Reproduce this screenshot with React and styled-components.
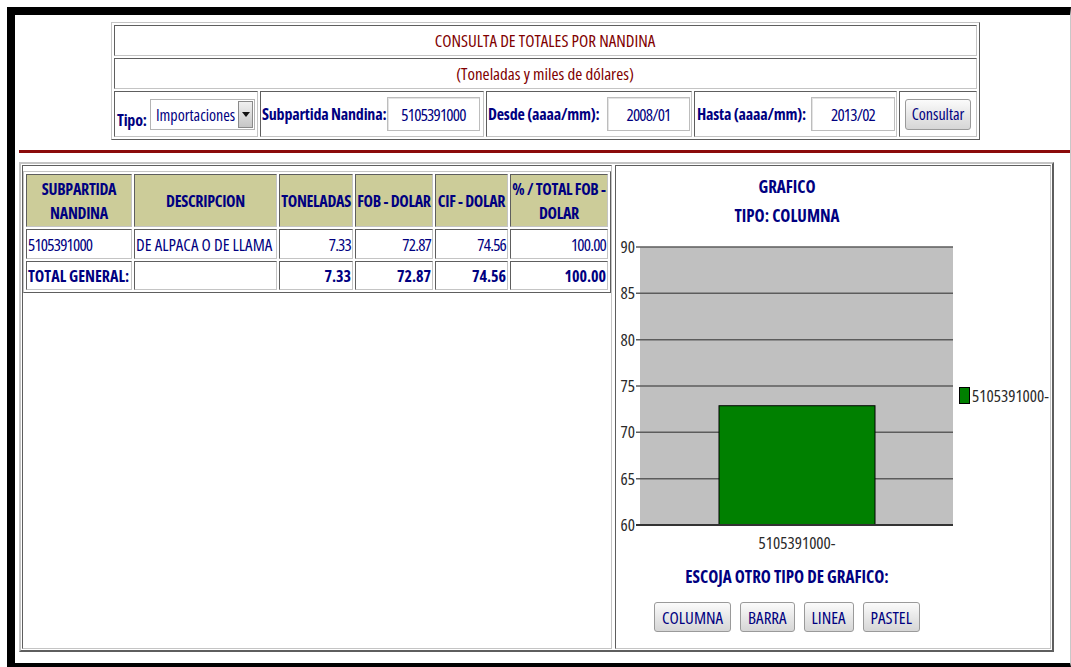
import React from 'react';
import styled, { createGlobalStyle } from 'styled-components';

const FONT = `"Open Sans", "Roboto Condensed", "DejaVu Sans Condensed", sans-serif`;
const STRETCH = '75%';
const NAVY = '#000080';
const MAROON = '#800000';
const LIGHT = '#c4c4c4';
const DARK = '#5e5e5e';

const GlobalStyle = createGlobalStyle`
  html, body { margin: 0; padding: 0; background: #fff; }
  body { font-family: ${FONT}; font-stretch: ${STRETCH}; color: ${NAVY}; }
  * { box-sizing: border-box; }
`;

const Frame = styled.div`
  margin: 7px 0 0 7px;
  height: 660px;
  border-top: 8px solid #000;
  border-left: 8px solid #000;
  border-bottom: 4px solid #000;
  border-right: 1px solid #c8c8c8;
  overflow: hidden;
`;

/* ---------- query form ---------- */
const QueryTable = styled.table`
  margin: 7px 0 0 96px;
  width: 869px;
  height: 118px;
  border-collapse: separate;
  border-spacing: 2px;
  border: 1px solid;
  border-color: ${LIGHT} ${DARK} ${DARK} ${LIGHT};
  table-layout: fixed;
`;

const Col = styled.col`
  width: ${p => p.$w}px;
`;

const FormRow = styled.tr`
  height: ${p => p.$h}px;
`;

const Cell = styled.td`
  border: 1px solid;
  border-color: ${DARK} ${LIGHT} ${LIGHT} ${DARK};
  padding: 0 ${p => p.$pad ?? 2}px 0 ${p => p.$padl ?? 1}px;
  text-align: ${p => p.$align || 'left'};
  vertical-align: middle;
`;

const Heading = styled.div`
  color: ${MAROON};
  font-size: 17px;
  line-height: 22px;
  text-align: center;
`;

const Field = styled.div`
  display: flex;
  align-items: ${p => (p.$bottom ? 'flex-end' : 'center')};
  justify-content: space-between;
  height: 44px;
  padding-bottom: ${p => (p.$bottom ? 6 : 0)}px;
`;

const Label = styled.span`
  font-weight: bold;
  font-size: 16px;
  letter-spacing: -0.2px;
  line-height: 20px;
  white-space: nowrap;
`;

const SelectBox = styled.div`
  display: flex;
  align-items: center;
  justify-content: space-between;
  width: 105px;
  height: 31px;
  border: 1px solid #b4b4b4;
  background: #fff;
  padding: 0 1px 0 5px;
  font-size: 16px;
`;

const SelectArrow = styled.span`
  width: 15px;
  height: 27px;
  border: 1px solid #8a8a8a;
  background: linear-gradient(#f0f0f0, #c6c6c6);
  display: flex;
  align-items: center;
  justify-content: center;
  &::after {
    content: '';
    border-left: 4px solid transparent;
    border-right: 4px solid transparent;
    border-top: 5px solid #111;
  }
`;

const TextInput = styled.input`
  width: ${p => p.$w}px;
  height: 34px;
  border: 1px solid #bdbdbd;
  box-shadow: inset 1px 1px 0 #e4e4e4;
  text-align: center;
  font-family: ${FONT};
  font-stretch: ${STRETCH};
  font-size: 17px;
  letter-spacing: -0.8px;
  color: ${NAVY};
  padding: 0;
  outline: none;
`;

const PushButton = styled.button`
  height: ${p => p.$h || 30}px;
  padding: 0 ${p => p.$px || 7}px;
  border: 1px solid #9a9a9a;
  border-radius: 3px;
  background: linear-gradient(#fbfbfb, #e6e6e6 55%, #d6d6d6);
  font-family: ${FONT};
  font-stretch: ${STRETCH};
  font-size: ${p => p.$fs || 17}px;
  color: ${NAVY};
  cursor: pointer;
`;

const RedRule = styled.div`
  margin: 10px 0 0 4px;
  height: 3px;
  background: #8b0a0a;
`;

/* ---------- results ---------- */
const Results = styled.div`
  margin: 9px 0 0 4px;
  width: 1035px;
  height: 490px;
  display: grid;
  grid-template-columns: 590px 436px;
  gap: 3px;
  padding: 1px;
  border: 2px solid;
  border-color: ${LIGHT} ${DARK} ${DARK} ${LIGHT};
`;

const Pane = styled.div`
  border: 1px solid;
  border-color: ${DARK} ${LIGHT} ${LIGHT} ${DARK};
  display: flex;
  flex-direction: column;
  align-items: stretch;
`;

const DataTable = styled.table`
  margin: 5px 0 0 0;
  border-collapse: separate;
  border-spacing: 2px;
  border: 1px solid;
  border-color: ${LIGHT} ${DARK} ${DARK} ${LIGHT};
  table-layout: fixed;
  width: 588px;
  font-size: 17px;
`;

const DataRow = styled.tr`
  height: ${p => p.$h}px;
`;

const HeadCell = styled.th`
  width: ${p => p.$w}px;
  background: #cccc99;
  border: 1px solid;
  border-color: ${DARK} ${LIGHT} ${LIGHT} ${DARK};
  font-weight: bold;
  font-size: 16px;
  letter-spacing: -0.3px;
  line-height: 24px;
  padding: 0;
  text-align: center;
  vertical-align: middle;
  white-space: nowrap;
  overflow: hidden;
`;

const DataCell = styled.td`
  border: 1px solid;
  border-color: ${DARK} ${LIGHT} ${LIGHT} ${DARK};
  padding: 0 1px;
  text-align: ${p => (p.$num ? 'right' : 'left')};
  font-weight: ${p => (p.$bold ? 'bold' : 'normal')};
  font-size: ${p => (p.$bold ? 16 : 17)}px;
  letter-spacing: ${p => (p.$digits && !p.$bold ? -0.8 : 0)}px;
  white-space: nowrap;
  overflow: hidden;
  vertical-align: middle;
`;

const Caption = styled.div`
  font-weight: bold;
  font-size: 17px;
  line-height: 22px;
  text-align: center;
  padding-right: 92px;
  margin-top: ${p => p.$mt || 0}px;
`;

const ChartSvg = styled.svg`
  display: block;
`;

const ButtonRow = styled.div`
  display: flex;
  justify-content: center;
  gap: 9px;
  padding-right: 92px;
  margin-top: 14px;
`;

const ChartText = styled.text`
  font-family: ${FONT};
  font-stretch: ${STRETCH};
  font-size: 17px;
  fill: #2a2a2a;
`;

const rows = [
  { code: '5105391000', desc: 'DE ALPACA O DE LLAMA', ton: '7.33', fob: '72.87', cif: '74.56', pct: '100.00' },
];

const TICKS = [90, 85, 80, 75, 70, 65, 60];
const PLOT = { x: 24, w: 313, top: 20, bottom: 298, min: 60, max: 90 };
const yOf = v => PLOT.top + ((PLOT.max - v) / (PLOT.max - PLOT.min)) * (PLOT.bottom - PLOT.top);

function ColumnChart({ label, value }) {
  const barTop = yOf(value);
  return (
    <ChartSvg width="434" height="330" viewBox="0 0 434 330">
      <rect x={PLOT.x} y={PLOT.top} width={PLOT.w} height={PLOT.bottom - PLOT.top} fill="#c0c0c0" />
      {TICKS.map(t => (
        <g key={t}>
          <line
            x1={PLOT.x - 4}
            x2={PLOT.x + PLOT.w}
            y1={yOf(t)}
            y2={yOf(t)}
            stroke={t === 60 ? '#333' : '#5c5c5c'}
            strokeWidth={t === 60 ? 2 : 1.5}
          />
          <ChartText x={PLOT.x - 5} y={yOf(t) + 6} textAnchor="end">{t}</ChartText>
        </g>
      ))}
      <rect x="103" y={barTop} width="156" height={PLOT.bottom - barTop} fill="#008000" stroke="#000" strokeWidth="1" />
      <line x1={PLOT.x - 4} x2={PLOT.x + PLOT.w} y1={PLOT.bottom} y2={PLOT.bottom} stroke="#333" strokeWidth="2" />
      <rect x="343.5" y="160.5" width="10" height="16" fill="#008000" stroke="#000" strokeWidth="1" />
      <ChartText x="356" y="175">{label}</ChartText>
      <ChartText x="181" y="322" textAnchor="middle">{label}</ChartText>
    </ChartSvg>
  );
}

export default function App() {
  const total = rows[0];
  return (
    <>
      <GlobalStyle />
      <Frame>
        <QueryTable>
          <colgroup>
            <Col $w={144} />
            <Col $w={224} />
            <Col $w={206} />
            <Col $w={203} />
            <Col $w={78} />
          </colgroup>
          <tbody>
            <FormRow $h={31}>
              <Cell colSpan={5}><Heading>CONSULTA DE TOTALES POR NANDINA</Heading></Cell>
            </FormRow>
            <FormRow $h={31}>
              <Cell colSpan={5}><Heading>(Toneladas y miles de dólares)</Heading></Cell>
            </FormRow>
            <FormRow $h={46}>
              <Cell $padl={2}>
                <Field $bottom>
                  <Label>Tipo:</Label>
                  <SelectBox>
                    <span>Importaciones</span>
                    <SelectArrow />
                  </SelectBox>
                </Field>
              </Cell>
              <Cell $pad={3}>
                <Field>
                  <Label>Subpartida Nandina:</Label>
                  <TextInput $w={93} value="5105391000" readOnly />
                </Field>
              </Cell>
              <Cell $pad={1}>
                <Field>
                  <Label>Desde (aaaa/mm):</Label>
                  <TextInput $w={83} value="2008/01" readOnly />
                </Field>
              </Cell>
              <Cell $pad={1} $padl={2}>
                <Field>
                  <Label>Hasta (aaaa/mm):</Label>
                  <TextInput $w={84} value="2013/02" readOnly />
                </Field>
              </Cell>
              <Cell $align="center" $pad={1}>
                <PushButton $h={31} $px={6} $fs={16}>Consultar</PushButton>
              </Cell>
            </FormRow>
          </tbody>
        </QueryTable>

        <RedRule />

        <Results>
          <Pane>
            <DataTable>
              <tbody>
                <DataRow $h={53}>
                  <HeadCell $w={106}>SUBPARTIDA<br />NANDINA</HeadCell>
                  <HeadCell $w={143}>DESCRIPCION</HeadCell>
                  <HeadCell $w={74}>TONELADAS</HeadCell>
                  <HeadCell $w={78}>FOB - DOLAR</HeadCell>
                  <HeadCell $w={73}>CIF - DOLAR</HeadCell>
                  <HeadCell $w={98}>% / TOTAL FOB -<br />DOLAR</HeadCell>
                </DataRow>
                {rows.map(r => (
                  <DataRow $h={30} key={r.code}>
                    <DataCell $digits>{r.code}</DataCell>
                    <DataCell>{r.desc}</DataCell>
                    <DataCell $num $digits>{r.ton}</DataCell>
                    <DataCell $num $digits>{r.fob}</DataCell>
                    <DataCell $num $digits>{r.cif}</DataCell>
                    <DataCell $num $digits>{r.pct}</DataCell>
                  </DataRow>
                ))}
                <DataRow $h={29}>
                  <DataCell $bold>TOTAL GENERAL:</DataCell>
                  <DataCell />
                  <DataCell $num $bold>{total.ton}</DataCell>
                  <DataCell $num $bold>{total.fob}</DataCell>
                  <DataCell $num $bold>{total.cif}</DataCell>
                  <DataCell $num $bold>{total.pct}</DataCell>
                </DataRow>
              </tbody>
            </DataTable>
          </Pane>

          <Pane>
            <Caption $mt={10}>GRAFICO</Caption>
            <Caption $mt={7}>TIPO: COLUMNA</Caption>
            <ColumnChart label="5105391000-" value={72.87} />
            <Caption $mt={9}>ESCOJA OTRO TIPO DE GRAFICO:</Caption>
            <ButtonRow>
              <PushButton>COLUMNA</PushButton>
              <PushButton>BARRA</PushButton>
              <PushButton>LINEA</PushButton>
              <PushButton>PASTEL</PushButton>
            </ButtonRow>
          </Pane>
        </Results>
      </Frame>
    </>
  );
}
